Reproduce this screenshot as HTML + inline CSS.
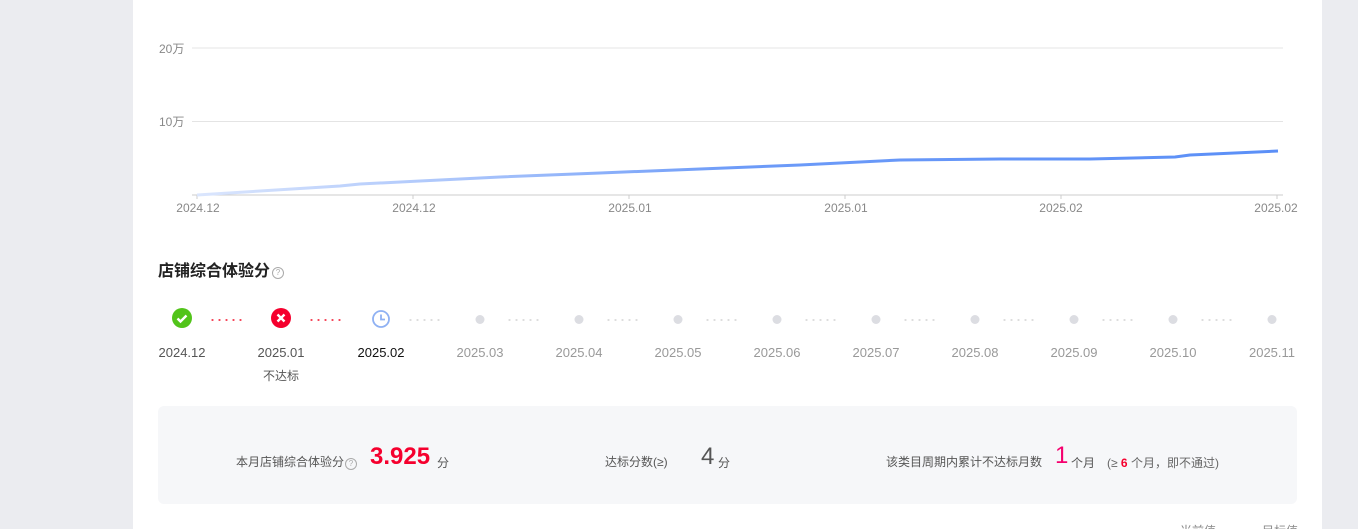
<html style="overflow:hidden;height:529px"><head><style>
body{margin:0;width:1358px;height:529px;background:#ebecf0;font-family:"Liberation Sans","Noto Sans CJK SC",sans-serif;position:relative;overflow:hidden}
.panel{position:absolute;left:133px;top:0;width:1189px;height:529px;background:#fff}
.a{position:absolute;white-space:nowrap}
.yl{font-size:12px;color:#888}
.xl{font-size:12px;color:#888;transform:translateX(-50%)}
.ml{font-size:13px;transform:translateX(-50%);top:345px}
.dot{position:absolute;top:315px;width:9px;height:9px;border-radius:50%;background:#dcdde2;transform:translateX(-50%)}
.dl{position:absolute;top:319px;height:2px;width:36px;background-image:radial-gradient(circle,#ddd 1px,transparent 1.2px);background-size:7px 2px}
.dl.r{background-image:radial-gradient(circle,#f5475a 1px,transparent 1.2px)}
</style></head><body>
<div class="panel"></div>
<svg class="a" style="left:0;top:0" width="1358" height="220">
<defs><linearGradient id="g" x1="197" x2="1278" gradientUnits="userSpaceOnUse"><stop offset="0" stop-color="#dbe6fd"/><stop offset="0.25" stop-color="#a9c4fb"/><stop offset="0.5" stop-color="#6d9bf8"/><stop offset="1" stop-color="#5b8ff7"/></linearGradient></defs>
<line x1="192" y1="48" x2="1283" y2="48" stroke="#e4e4e4"/>
<line x1="192" y1="121.5" x2="1283" y2="121.5" stroke="#e4e4e4"/>
<line x1="192" y1="195" x2="1283" y2="195" stroke="#ccc"/>
<g stroke="#ccc"><line x1="197" y1="195" x2="197" y2="199"/><line x1="413" y1="195" x2="413" y2="199"/><line x1="629" y1="195" x2="629" y2="199"/><line x1="845" y1="195" x2="845" y2="199"/><line x1="1061" y1="195" x2="1061" y2="199"/><line x1="1277" y1="195" x2="1277" y2="199"/></g>
<polyline fill="none" stroke="url(#g)" stroke-width="3" stroke-linejoin="round" points="197,195 260,191 340,186 360,184 420,181 500,177 600,173 700,169 800,165 900,160 1000,159 1090,159 1175,157 1190,155 1278,151"/>
</svg>
<div class="a yl" style="left:159px;top:40px">20万</div>
<div class="a yl" style="left:159px;top:113px">10万</div>
<div class="a xl" style="left:198px;top:201px">2024.12</div>
<div class="a xl" style="left:414px;top:201px">2024.12</div>
<div class="a xl" style="left:630px;top:201px">2025.01</div>
<div class="a xl" style="left:846px;top:201px">2025.01</div>
<div class="a xl" style="left:1061px;top:201px">2025.02</div>
<div class="a xl" style="left:1276px;top:201px">2025.02</div>
<div class="a" style="left:158px;top:257px;font-size:16px;font-weight:bold;color:#222">店铺综合体验分<span style="display:inline-block;width:10px;height:10px;border:1px solid #aaa;border-radius:50%;font-size:8px;color:#aaa;text-align:center;line-height:10px;font-weight:normal;margin-left:2px;vertical-align:1px">?</span></div>
<svg class="a" style="left:172px;top:308px" width="20" height="20"><circle cx="10" cy="10" r="10" fill="#52c41a"/><path d="M5.5 10.5l3 3 6-6" stroke="#fff" stroke-width="2.4" fill="none"/></svg>
<svg class="a" style="left:271px;top:308px" width="20" height="20"><circle cx="10" cy="10" r="10" fill="#f5002e"/><path d="M6.5 6.5l7 7M13.5 6.5l-7 7" stroke="#fff" stroke-width="2.4"/></svg>
<svg class="a" style="left:371px;top:309px" width="20" height="20"><circle cx="10" cy="10" r="8" fill="none" stroke="#8fb1f3" stroke-width="1.8"/><path d="M10 5.5V10.5h4" stroke="#8fb1f3" stroke-width="1.8" fill="none"/></svg>
<div class="dl r" style="left:209px"></div><div class="dl r" style="left:308px"></div>
<div class="dl" style="left:407px"></div><div class="dl" style="left:506px"></div><div class="dl" style="left:605px"></div><div class="dl" style="left:704px"></div><div class="dl" style="left:803px"></div><div class="dl" style="left:902px"></div><div class="dl" style="left:1001px"></div><div class="dl" style="left:1100px"></div><div class="dl" style="left:1199px"></div>
<div class="dot" style="left:480px"></div><div class="dot" style="left:579px"></div><div class="dot" style="left:678px"></div><div class="dot" style="left:777px"></div><div class="dot" style="left:876px"></div><div class="dot" style="left:975px"></div><div class="dot" style="left:1074px"></div><div class="dot" style="left:1173px"></div><div class="dot" style="left:1272px"></div>
<div class="a ml" style="left:182px;color:#555">2024.12</div>
<div class="a ml" style="left:281px;color:#555">2025.01</div>
<div class="a ml" style="left:381px;color:#111">2025.02</div>
<div class="a ml" style="left:480px;color:#999">2025.03</div>
<div class="a ml" style="left:579px;color:#999">2025.04</div>
<div class="a ml" style="left:678px;color:#999">2025.05</div>
<div class="a ml" style="left:777px;color:#999">2025.06</div>
<div class="a ml" style="left:876px;color:#999">2025.07</div>
<div class="a ml" style="left:975px;color:#999">2025.08</div>
<div class="a ml" style="left:1074px;color:#999">2025.09</div>
<div class="a ml" style="left:1173px;color:#999">2025.10</div>
<div class="a ml" style="left:1272px;color:#999">2025.11</div>
<div class="a" style="left:281px;top:367px;font-size:12px;color:#555;transform:translateX(-50%)">不达标</div>
<div class="a" style="left:158px;top:406px;width:1139px;height:98px;background:#f6f7f9;border-radius:6px"></div>
<div class="a" style="left:236px;top:453px;font-size:12px;color:#555">本月店铺综合体验分<span style="display:inline-block;width:10px;height:10px;border:1px solid #aaa;border-radius:50%;font-size:8px;color:#aaa;text-align:center;line-height:10px;margin-left:1px">?</span></div>
<div class="a" style="left:370px;top:443px;font-size:24px;font-weight:bold;color:#f5002e">3.925</div>
<div class="a" style="left:437px;top:454px;font-size:12px;color:#555">分</div>
<div class="a" style="left:605px;top:453px;font-size:12px;color:#555">达标分数(≥)</div>
<div class="a" style="left:701px;top:443px;font-size:24px;color:#555">4</div>
<div class="a" style="left:718px;top:454px;font-size:12px;color:#555">分</div>
<div class="a" style="left:886px;top:453px;font-size:12px;color:#555">该类目周期内累计不达标月数</div>
<div class="a" style="left:1055px;top:442px;font-size:24px;color:#f5006e">1</div>
<div class="a" style="left:1071px;top:454px;font-size:12px;color:#555">个月</div>
<div class="a" style="left:1107px;top:454px;font-size:12px;color:#666">(≥ <b style="color:#f5002e">6</b> 个月，即不通过)</div>
<div class="a" style="left:1180px;top:522px;font-size:12px;color:#888">当前值</div>
<div class="a" style="left:1262px;top:522px;font-size:12px;color:#888">目标值</div>
</body></html>
